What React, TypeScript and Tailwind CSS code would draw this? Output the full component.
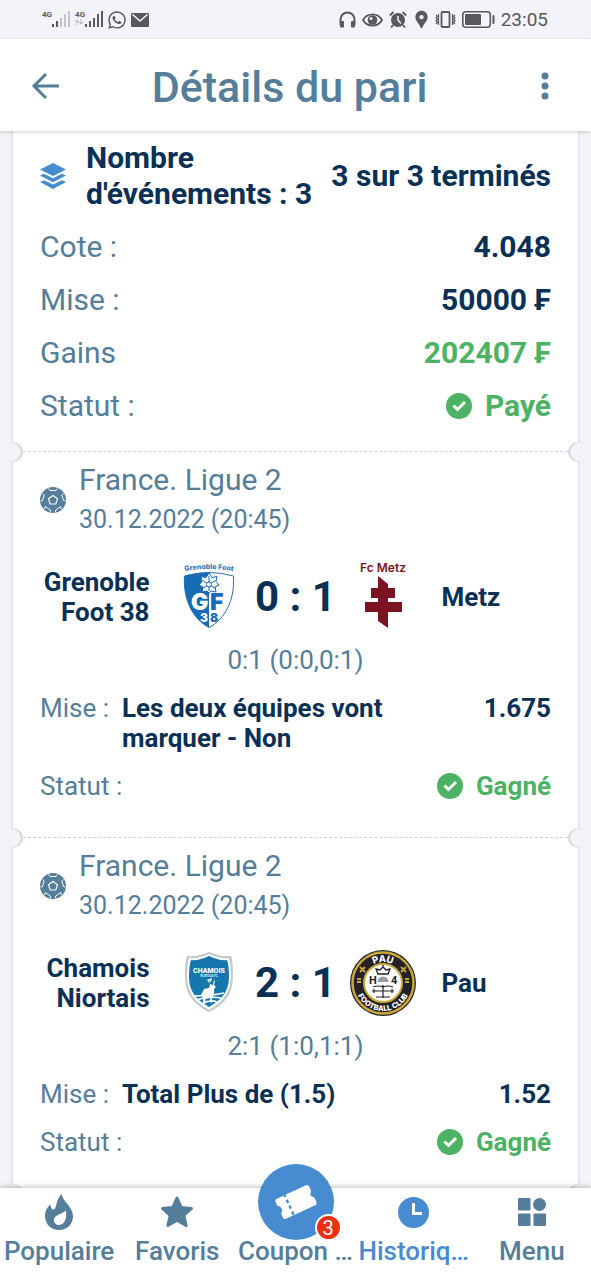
import type { ReactNode } from "react";
import clsx from "clsx";
import { FaWhatsapp } from "react-icons/fa";
import { MdEmail, MdLocationPin } from "react-icons/md";

type Match = {
  id: number;
  league: string;
  date: string;
  home: string;
  away: string;
  homeLogo: ReactNode;
  awayLogo: ReactNode;
  score: string;
  detail: string;
  bet: string;
  odd: string;
  status: string;
};

const SignalBars = ({ weak = false }: { weak?: boolean }) => (
  <svg width="18" height="17" viewBox="0 0 18 17" fill="#58595c" aria-hidden="true">
    <rect x="0" y="13" width="2" height="3" />
    <rect x="4" y="10" width="2" height="6" />
    <g opacity={weak ? 0.3 : 1}>
      <rect x="8" y="7" width="2" height="9" />
      <rect x="12" y="3" width="2" height="13" />
      <rect x="16" y="0" width="2" height="16" />
    </g>
  </svg>
);

const StatusBar = () => (
  <div className="flex h-[39px] shrink-0 items-center justify-between bg-[#f3f4f9] pr-[43px] pl-[42px] text-[#58595c]">
    <div className="flex items-center">
      <span className="self-start text-[8px] leading-[9px] font-bold">4G</span>
      <SignalBars weak />
      <div className="ml-[5px] flex flex-col self-start text-[8px] leading-[9px] font-bold">
        <span>4G</span>
        <svg width="8" height="6" viewBox="0 0 8 6" fill="none" stroke="#b5b6ba" aria-hidden="true">
          <path d="M2 6V1M0 3l2-2 2 2M6 0v5M4 3l2 2 2-2" />
        </svg>
      </div>
      <SignalBars />
      <FaWhatsapp size={20} className="ml-1" />
      <svg className="ml-1" width="18" height="14" viewBox="0 0 18 14" aria-hidden="true">
        <rect width="18" height="14" rx="1" fill="#58595c" />
        <path d="m1.500 1.500 7.500 6.500 7.500-6.500" fill="none" stroke="#f3f4f9" strokeWidth="1.600" />
      </svg>
    </div>
    <div className="flex items-center">
      <svg width="17" height="17" viewBox="0 0 17 17" fill="none" aria-hidden="true">
        <path d="M1.500 14V8.500a7 7 0 0 1 14 0V14" stroke="#58595c" strokeWidth="2" />
        <rect x="1" y="10" width="4" height="6.500" rx="1" fill="#58595c" />
        <rect x="12" y="10" width="4" height="6.500" rx="1" fill="#58595c" />
      </svg>
      <svg className="ml-[6px]" width="21" height="14" viewBox="0 0 21 14" fill="none" aria-hidden="true">
        <path d="M1 7C5-.5 16-.5 20 7C16 14.500 5 14.500 1 7Z" stroke="#58595c" strokeWidth="1.800" />
        <circle cx="10.500" cy="7" r="4.800" fill="#58595c" />
        <circle cx="9" cy="5.500" r="1.500" fill="#f3f4f9" />
      </svg>
      <svg className="ml-[6px]" width="18" height="17" viewBox="0 0 18 17" fill="none" aria-hidden="true">
        <circle cx="9" cy="9" r="7" fill="#58595c" />
        <path d="M9 5v4l3 3.500" stroke="#f3f4f9" strokeWidth="1.500" />
        <path d="M.8 4.500 4.500 1M17.200 4.500 13.500 1M4 14l-1.800 2.500M14 14l1.800 2.500" stroke="#58595c" strokeWidth="1.800" />
      </svg>
      <MdLocationPin size={21} className="ml-1" />
      <svg className="ml-[3px]" width="21" height="17" viewBox="0 0 21 17" fill="none" stroke="#58595c" aria-hidden="true">
        <rect x="6.500" y="1" width="8" height="15" rx="1" strokeWidth="1.800" />
        <path d="M1 4l1.500 1.500L1 7l1.500 1.500L1 10l1.500 1.500L1 13M3.500 3v11M20 4l-1.500 1.500L20 7l-1.500 1.500L20 10l-1.500 1.500L20 13M17.500 3v11" strokeWidth="1.200" />
      </svg>
      <svg className="ml-[6px]" width="33" height="17" viewBox="0 0 33 17" fill="none" aria-hidden="true">
        <rect x=".8" y=".8" width="27.500" height="15.400" rx="3" stroke="#58595c" strokeWidth="1.600" />
        <rect x="3" y="3" width="16" height="11" rx="1" fill="#58595c" />
        <rect x="30.500" y="4" width="2" height="9" rx="1" fill="#58595c" />
      </svg>
      <time className="ml-[6px] text-[19px] leading-6">23:05</time>
    </div>
  </div>
);

const Header = () => (
  <header className="z-10 flex h-[92px] shrink-0 items-center bg-white pt-1 pr-[30px] pl-[30px] text-[#557e9a] shadow-[0_1px_4px_rgba(0,0,0,0.2)]">
    <button type="button" aria-label="Retour">
      <svg width="32" height="32" viewBox="0 0 32 32" fill="none" stroke="currentColor" strokeWidth="3">
        <path d="M29 15H4M16 3 4 15l12 12" />
      </svg>
    </button>
    <h1 className="flex-1 pr-3 text-center text-[43px] leading-[48px] font-medium">Détails du pari</h1>
    <button type="button" aria-label="Options">
      <svg width="32" height="32" viewBox="0 0 32 32" fill="currentColor">
        <circle cx="16" cy="5" r="3.500" />
        <circle cx="16" cy="15" r="3.500" />
        <circle cx="16" cy="25" r="3.500" />
      </svg>
    </button>
  </header>
);

const CheckIcon = () => (
  <svg width="26" height="26" viewBox="0 0 26 26" aria-hidden="true">
    <circle cx="13" cy="13" r="13" fill="#4bb363" />
    <path d="m7.500 12.500 4 4 7.500-7.500" fill="none" stroke="#fff" strokeWidth="3" />
  </svg>
);

const LayersIcon = () => (
  <svg className="shrink-0" width="26" height="26" viewBox="0 0 26 26" fill="#478bd0" aria-hidden="true">
    <path d="M13 0 26 6.500 13 13 0 6.500Z" />
    <path d="M0 12.500 4 10.800 13 15.200 22 10.800 26 12.500 13 19.300Z" />
    <path d="M0 19 4 17.200 13 21.600 22 17.200 26 19 13 26Z" />
  </svg>
);

const BallIcon = () => (
  <svg className="shrink-0" width="26" height="26" viewBox="0 0 26 26" fill="none" stroke="#fff" strokeWidth="1" aria-hidden="true">
    <circle cx="13" cy="13" r="13" fill="#557e9a" stroke="none" />
    <path d="m13 8.500 4.500 3.300-1.700 5.200h-5.600l-1.700-5.200Z" strokeWidth="1.200" />
    <path d="M8.500 1.500 10 3.500h6l1.500-2M23.500 6.500l-1.700 1.500 1.700 5.500 2 .5M21.500 22l-.8-2.500-5 3.500-.2 2.300M10.500 25.300l-.2-2.300-5-3.500-.8 2.500M.5 14l2-.5L4.200 8 2.500 6.500" />
  </svg>
);

const GrenobleLogo = () => (
  <svg width="66" height="66" viewBox="0 0 66 66" className="overflow-visible" role="img" aria-label="Grenoble Foot 38">
    <defs>
      <path id="grenoble-arc" d="M4 8Q33 2 62 8" />
    </defs>
    <text fontFamily="Inter, sans-serif" fontSize="7" fontWeight="800" fill="#3474b5" textAnchor="middle">
      <textPath href="#grenoble-arc" startOffset="50%">
        Grenoble Foot
      </textPath>
    </text>
    <path d="M8.500 12Q33 5 57.500 12C59 36 49 55 33 63.500C17 55 7 36 8.500 12Z" fill="#fff" stroke="#2370b4" />
    <path d="M8.500 12Q21 8 33 8.500V63.500C17 55 7 36 8.500 12Z" fill="#176cb5" />
    <path d="m33 9 3 4.500 5-1-1 5 3 3.500-4 2 1 5-5-1-2 2-2-2-5 1 1-5-4-2 3-3.500-1-5 5 1Z" fill="#fff" stroke="#176cb5" strokeWidth="1" />
    <path d="M33 12v15M26.500 16.500l13 8M39.500 16.500l-13 8" stroke="#176cb5" strokeWidth="1" />
    <circle cx="33" cy="20.500" r="2.500" fill="#fff" stroke="#176cb5" />
    <g fontFamily="Inter, sans-serif" fontWeight="900">
      <text x="15" y="46" fontSize="23" fill="#fff">
        G
      </text>
      <text x="34" y="46" fontSize="23" fill="#176cb5">
        F
      </text>
      <text x="24" y="58" fontSize="12" fill="#fff">
        3
      </text>
      <text x="34" y="58" fontSize="12" fill="#176cb5">
        8
      </text>
    </g>
  </svg>
);

const MetzLogo = () => (
  <svg width="66" height="66" viewBox="0 0 66 66" className="overflow-visible" fill="#7b1420" role="img" aria-label="FC Metz">
    <text x="33" y="8" fontFamily="Inter, sans-serif" fontSize="12" fontWeight="600" textAnchor="middle">
      Fc Metz
    </text>
    <path d="m28 12 10 8v4h7v10h-7v4h14v10H38v16l-10-7v-9H15V38h13v-4h-7V24h7Z" />
  </svg>
);

const NiortLogo = () => (
  <svg width="66" height="66" viewBox="0 0 66 66" role="img" aria-label="Chamois Niortais">
    <path d="M33 2Q44 7 55 6Q57 12 57 26C57 44 49 54 33 62C17 54 9 44 9 26Q9 12 11 6Q22 7 33 2Z" fill="#bfc9ce" />
    <path d="M33 4Q44 9 53 8Q55 14 55 26C55 43 47 52 33 60C19 52 11 43 11 26Q11 14 13 8Q22 9 33 4Z" fill="#f5fafb" />
    <path d="M33 6Q43 11 51 10Q53 16 53 27C53 42 45 50 33 57C21 50 13 42 13 27Q13 16 15 10Q23 11 33 6Z" fill="#1577ad" />
    <text x="33" y="23" fontFamily="Roboto, sans-serif" fontSize="7" fontWeight="900" fill="#fff" textAnchor="middle">
      CHAMOIS
    </text>
    <text x="33" y="27" fontFamily="Roboto, sans-serif" fontSize="3" fontWeight="700" fill="#d4e8f2" textAnchor="middle">
      NIORTAIS FC
    </text>
    <path d="m36 28-1 4-2-2 1 4 3 1 1-5 1 1-1 4 2 2-2 2v6l-2 3v5h-1l-1-6h-4l-1 6h-2v-5l-2-3 3-6 5-1 1-4-3-4Z" fill="#fff" />
    <path d="M17 46Q35 46 48 43M20 50Q35 46 45 48M26 54Q34 49 41 52" fill="none" stroke="#fff" strokeWidth="1.500" />
  </svg>
);

const PauLogo = () => (
  <svg width="66" height="66" viewBox="0 0 66 66" role="img" aria-label="Pau Football Club">
    <defs>
      <path id="pau-top" d="M12 33a21 21 0 0 1 42 0" />
      <path id="pau-bottom" d="M5 33a28 28 0 0 0 56 0" />
    </defs>
    <circle cx="33" cy="33" r="33" fill="#24202a" />
    <circle cx="33" cy="33" r="30.500" fill="none" stroke="#c7a937" strokeWidth="2.500" />
    <circle cx="33" cy="33" r="19" fill="#fff" stroke="#c7a937" strokeWidth="2" />
    <g fontFamily="Inter, sans-serif" fontWeight="800" fill="#fff" textAnchor="middle">
      <text fontSize="9.500">
        <textPath href="#pau-top" startOffset="50%">
          PAU
        </textPath>
      </text>
      <text fontSize="7.500">
        <textPath href="#pau-bottom" startOffset="50%">
          FOOTBALL CLUB
        </textPath>
      </text>
    </g>
    <path d="m10 17 5 5M15 17l-5 5M51 17l5 5M56 17l-5 5M7 29h4M7 32h4M55 29h4M55 32h4" stroke="#c7a937" strokeWidth="1.800" />
    <g fill="#24202a" fontFamily="Roboto, sans-serif" fontSize="11" fontWeight="700">
      <text x="19" y="34">
        H
      </text>
      <text x="41" y="34">
        4
      </text>
    </g>
    <path d="M28 24l-2-5 4 1 3-3 3 3 4-1-2 5ZM33 15v3" fill="none" stroke="#24202a" strokeWidth="1.300" />
    <path d="M27.500 32a5.500 5.500 0 0 1 11 0Z" fill="#9c9aa0" />
    <path d="M23 37q5-2 10 0 5-2 10 0M33 35v13M22 41h22M24 39v4M42 39v4M26 47h14" fill="none" stroke="#24202a" strokeWidth="1.200" />
  </svg>
);

const matches: Match[] = [
  {
    id: 1,
    league: "France. Ligue 2",
    date: "30.12.2022 (20:45)",
    home: "Grenoble Foot 38",
    away: "Metz",
    homeLogo: <GrenobleLogo />,
    awayLogo: <MetzLogo />,
    score: "0 : 1",
    detail: "0:1 (0:0,0:1)",
    bet: "Les deux équipes vont marquer - Non",
    odd: "1.675",
    status: "Gagné",
  },
  {
    id: 2,
    league: "France. Ligue 2",
    date: "30.12.2022 (20:45)",
    home: "Chamois Niortais",
    away: "Pau",
    homeLogo: <NiortLogo />,
    awayLogo: <PauLogo />,
    score: "2 : 1",
    detail: "2:1 (1:0,1:1)",
    bet: "Total Plus de (1.5)",
    odd: "1.52",
    status: "Gagné",
  },
];

const TicketCut = () => (
  <div className="relative h-px" aria-hidden="true">
    <div className="mx-[10px] border-t border-dashed border-[#cfd1d4]" />
    <span className="absolute -top-[9px] -left-[10px] size-5 rounded-full bg-[#f3f4f9] shadow-[inset_-2px_0_2px_rgba(0,0,0,0.14)]" />
    <span className="absolute -top-[9px] -right-[10px] size-5 rounded-full bg-[#f3f4f9] shadow-[inset_2px_0_2px_rgba(0,0,0,0.14)]" />
  </div>
);

const SummaryRow = ({ label, children, paid }: { label: string; children: ReactNode; paid?: boolean }) => (
  <div className="flex items-center justify-between">
    <dt className="text-[#557e9a]">{label}</dt>
    <dd className={clsx("flex items-center gap-[13px] font-bold", paid ? "text-[#4bb363]" : "text-[#0a3155]")}>{children}</dd>
  </div>
);

const Summary = () => (
  <section className="px-[27px] pt-[9px] pb-[27px] text-[30px] leading-9">
    <div className="flex items-center font-bold text-[#0a3155]">
      <LayersIcon />
      <h2 className="ml-5 flex-1">Nombre d'événements : 3</h2>
      <p className="shrink-0">3 sur 3 terminés</p>
    </div>
    <dl className="mt-[17px] flex flex-col gap-[17px]">
      <SummaryRow label="Cote :">4.048</SummaryRow>
      <SummaryRow label="Mise :">50000 ₣</SummaryRow>
      <SummaryRow label="Gains" paid>
        202407 ₣
      </SummaryRow>
      <SummaryRow label="Statut :" paid>
        <CheckIcon />
        Payé
      </SummaryRow>
    </dl>
  </section>
);

const MatchCard = ({ match }: { match: Match }) => (
  <section className="px-[27px] pt-2 pb-9 text-[26px] leading-[30px] text-[#557e9a]">
    <div className="flex items-center gap-[13px]">
      <BallIcon />
      <div className="leading-10">
        <h2 className="text-[30px]">{match.league}</h2>
        <time className="block text-[25px]">{match.date}</time>
      </div>
    </div>
    <div className="mt-6 grid grid-cols-[1fr_auto_1fr] items-center gap-[26px] font-bold text-[#0a3155]">
      <p className="text-right">{match.home}</p>
      <div className="flex items-center">
        {match.homeLogo}
        <span className="w-[108px] text-center text-[42px] leading-[48px]">{match.score}</span>
        {match.awayLogo}
      </div>
      <p>{match.away}</p>
    </div>
    <p className="mt-[15px] text-center">{match.detail}</p>
    <dl className="mt-[18px] flex flex-col gap-[18px]">
      <div className="flex gap-[13px]">
        <dt className="shrink-0">Mise :</dt>
        <dd className="flex flex-1 justify-between gap-14 font-bold text-[#0a3155]">
          <span>{match.bet}</span>
          <span>{match.odd}</span>
        </dd>
      </div>
      <div className="flex justify-between">
        <dt>Statut :</dt>
        <dd className="flex items-center gap-[13px] font-bold text-[#4bb363]">
          <CheckIcon />
          {match.status}
        </dd>
      </div>
    </dl>
  </section>
);

const NavItem = ({ label, active, children }: { label: string; active?: boolean; children: ReactNode }) => (
  <a href="#" className={clsx("flex min-w-0 flex-1 flex-col items-center", active ? "text-[#478bd0]" : "text-[#557e9a]")}>
    <span className="flex h-12 items-center justify-center">{children}</span>
    <span className="text-[26px] leading-[30px] font-medium whitespace-nowrap">{label}</span>
  </a>
);

const BottomNav = () => (
  <nav className="z-10 flex h-[92px] shrink-0 bg-white shadow-[0_-1px_5px_rgba(0,0,0,0.25)]">
    <NavItem label="Populaire">
      <svg width="28" height="36" viewBox="0 0 84 108" fill="currentColor" aria-hidden="true">
        <path
          fillRule="evenodd"
          d="M50 0C52 22 84 38 84 66C84 92 66 108 42 108C18 108 0 90 0 65C0 50 8 40 16 31C17 41 20 47 26 47C37 42 30 20 50 0ZM62 49C57 60 28 61 27 77C26 86 33 93 43 93C60 92 67 70 62 49Z"
        />
      </svg>
    </NavItem>
    <NavItem label="Favoris">
      <svg width="34" height="34" viewBox="0 0 34 34" fill="currentColor" stroke="currentColor" strokeWidth="3" strokeLinejoin="round" aria-hidden="true">
        <path d="m17 3 4.300 9.500 10.200 1-7.700 6.900 2.300 10.100L17 25.300l-9.100 5.200 2.300-10.100-7.700-6.900 10.200-1Z" />
      </svg>
    </NavItem>
    <NavItem label="Coupon …">
      <span className="relative -mt-[20px] flex size-[76px] shrink-0 items-center justify-center rounded-full bg-[#478bd0]">
        <svg width="44" height="36" viewBox="0 0 44 36" aria-hidden="true">
          <g transform="rotate(-25 22 18)">
            <path
              d="M6 7H38a2.500 2.500 0 0 1 2.500 2.500V13.500a2.500 2.500 0 0 1-1 2a3 3 0 0 0 0 5a2.500 2.500 0 0 1 1 2V26.500A2.500 2.500 0 0 1 38 29H6a2.500 2.500 0 0 1-2.500-2.500V22.500a5 5 0 0 0 0-9V9.500A2.500 2.500 0 0 1 6 7Z"
              fill="#fff"
            />
            <path d="M14.500 5.500v25" stroke="#478bd0" strokeWidth="2.400" strokeDasharray="3.500 3" />
          </g>
        </svg>
        <span className="absolute -right-2 -bottom-[1px] flex size-[27px] items-center justify-center rounded-full border-2 border-white bg-[#ee2f12] text-[20px] leading-6 text-white">
          3
        </span>
      </span>
    </NavItem>
    <NavItem label="Historiq…" active>
      <svg width="31" height="31" viewBox="0 0 31 31" aria-hidden="true">
        <circle cx="15.500" cy="15.500" r="15.500" fill="currentColor" />
        <path d="M15.500 6v10.500H24" fill="none" stroke="#fff" strokeWidth="3" />
      </svg>
    </NavItem>
    <NavItem label="Menu">
      <svg width="28" height="28" viewBox="0 0 28 28" fill="currentColor" aria-hidden="true">
        <rect width="12.500" height="12.500" rx="1" />
        <circle cx="21.500" cy="6.500" r="6.500" />
        <rect y="15.500" width="12.500" height="12.500" rx="1" />
        <rect x="15.500" y="15.500" width="12.500" height="12.500" rx="1" />
      </svg>
    </NavItem>
  </nav>
);

const App = () => {
  return (
    <div className="flex h-dvh flex-col bg-[#f3f4f9] font-[Roboto,sans-serif]">
      <StatusBar />
      <Header />
      <main className="min-h-0 flex-1 overflow-y-auto px-[13px] [scrollbar-width:none]">
        <article className="bg-white shadow-[0_0_3px_rgba(0,0,0,0.2)]">
          <Summary />
          {matches.map((match) => (
            <div key={match.id}>
              <TicketCut />
              <MatchCard match={match} />
            </div>
          ))}
          <TicketCut />
        </article>
      </main>
      <BottomNav />
    </div>
  );
};

export default App;
